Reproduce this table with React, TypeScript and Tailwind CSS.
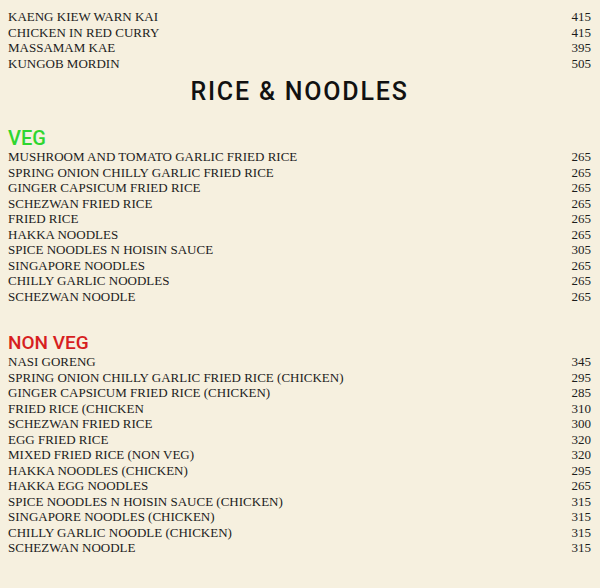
const topItems: [string, number][] = [
  ["KAENG KIEW WARN KAI", 415],
  ["CHICKEN IN RED CURRY", 415],
  ["MASSAMAM KAE", 395],
  ["KUNGOB MORDIN", 505],
];

const vegItems: [string, number][] = [
  ["MUSHROOM AND TOMATO GARLIC FRIED RICE", 265],
  ["SPRING ONION CHILLY GARLIC FRIED RICE", 265],
  ["GINGER CAPSICUM FRIED RICE", 265],
  ["SCHEZWAN FRIED RICE", 265],
  ["FRIED RICE", 265],
  ["HAKKA NOODLES", 265],
  ["SPICE NOODLES N HOISIN SAUCE", 305],
  ["SINGAPORE NOODLES", 265],
  ["CHILLY GARLIC NOODLES", 265],
  ["SCHEZWAN NOODLE", 265],
];

const nonVegItems: [string, number][] = [
  ["NASI GORENG", 345],
  ["SPRING ONION CHILLY GARLIC FRIED RICE (CHICKEN)", 295],
  ["GINGER CAPSICUM FRIED RICE (CHICKEN)", 285],
  ["FRIED RICE (CHICKEN", 310],
  ["SCHEZWAN FRIED RICE", 300],
  ["EGG FRIED RICE", 320],
  ["MIXED FRIED RICE (NON VEG)", 320],
  ["HAKKA NOODLES (CHICKEN)", 295],
  ["HAKKA EGG NOODLES", 265],
  ["SPICE NOODLES N HOISIN SAUCE (CHICKEN)", 315],
  ["SINGAPORE NOODLES (CHICKEN)", 315],
  ["CHILLY GARLIC NOODLE (CHICKEN)", 315],
  ["SCHEZWAN NOODLE", 315],
];

const serif = "font-['Liberation_Serif',serif]";
const sans = "font-['Roboto','Liberation_Sans',sans-serif]";

function Rows({ items }: { items: [string, number][] }) {
  return (
    <ul className={`${serif} text-[13px] leading-[15.5px] text-[#1c1c1c]`}>
      {items.map(([name, price], i) => (
        <li key={i} className="flex justify-between">
          <span>{name}</span>
          <span>{price}</span>
        </li>
      ))}
    </ul>
  );
}

export default function App() {
  return (
    <main className="h-[588px] w-[600px] bg-[#f6f0df] pl-2 pr-[9px] pt-[9px]">
      <Rows items={topItems} />

      <h1
        className={`${sans} mt-[6px] text-center text-[25px] font-medium leading-[30px] tracking-[1.8px] text-[#111]`}
      >
        RICE &amp; NOODLES
      </h1>

      <h2 className={`${sans} mt-5 text-[20px] font-medium leading-[22px] text-[#2fd62f]`}>VEG</h2>
      <Rows items={vegItems} />

      <h2 className={`${sans} mt-[28px] text-[19px] font-medium leading-[22px] text-[#d71f1f]`}>NON VEG</h2>
      <Rows items={nonVegItems} />
    </main>
  );
}
